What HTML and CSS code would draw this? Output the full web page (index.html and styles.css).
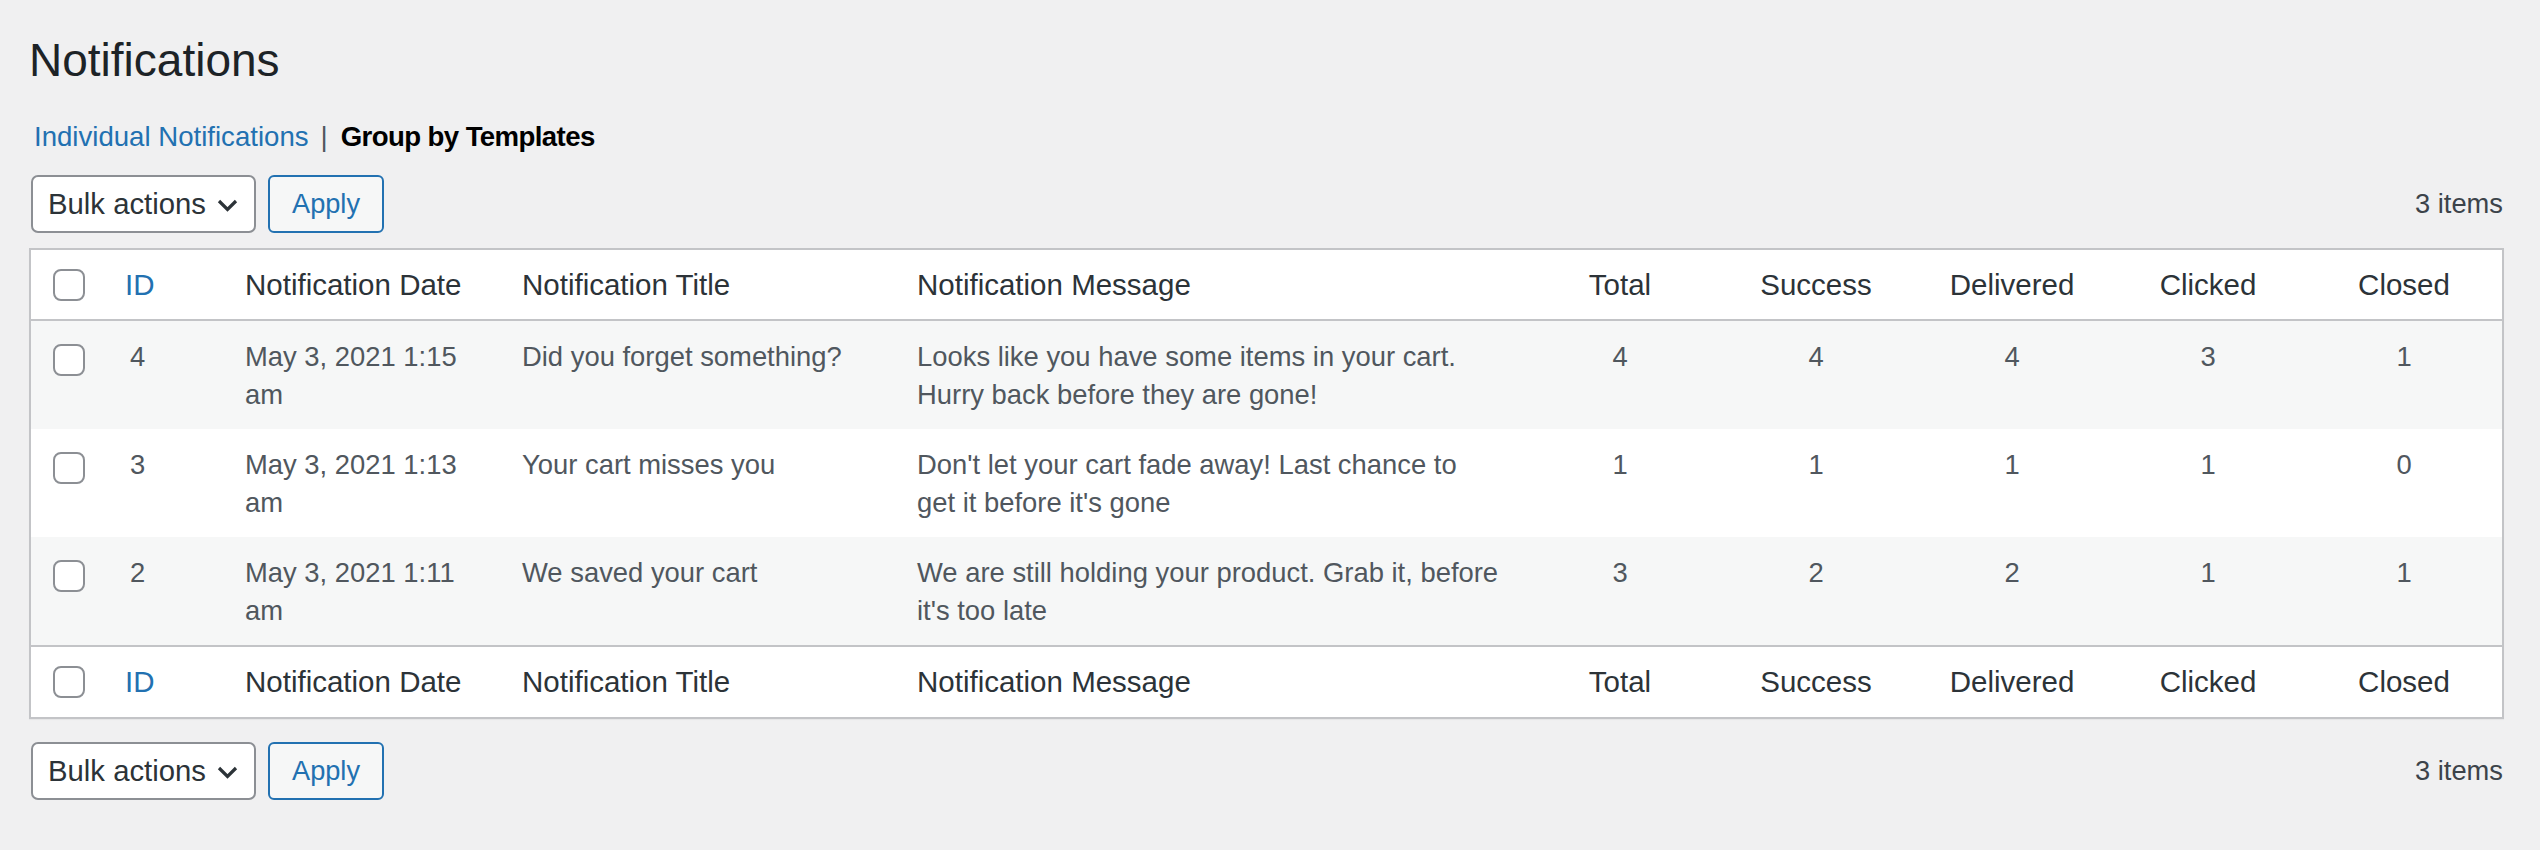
FILE: index.html
```html
<!DOCTYPE html>
<html lang="en">
<head>
<meta charset="utf-8">
<title>Notifications</title>
<link rel="stylesheet" href="styles.css">
</head>
<body>
<div class="wrap">
  <h1 class="page-title">Notifications</h1>
  <ul class="subsubsub">
    <li><a class="tab-link" href="#">Individual Notifications</a><span class="sep">|</span></li>
    <li><span class="current">Group by Templates</span></li>
  </ul>

  <div class="tablenav tablenav-top">
    <div class="actions">
      <div class="select">
        <span>Bulk actions</span>
        <svg class="chevron" width="21" height="13" viewBox="0 0 21 13"><path d="M2 2 L10.5 10.5 L19 2" fill="none" stroke="#2c3338" stroke-width="3.2"/></svg>
      </div>
      <button class="button" type="button">Apply</button>
    </div>
    <div class="count">3 items</div>
  </div>

  <table class="list">
    <colgroup>
      <col class="c-check"><col class="c-id"><col class="c-date"><col class="c-title"><col class="c-msg">
      <col class="c-num"><col class="c-num"><col class="c-num"><col class="c-num"><col class="c-num">
    </colgroup>
    <thead>
      <tr>
        <th class="check"><span class="cb"></span></th>
        <th class="col-id"><a href="#">ID</a></th>
        <th>Notification Date</th>
        <th>Notification Title</th>
        <th>Notification Message</th>
        <th class="num">Total</th>
        <th class="num">Success</th>
        <th class="num">Delivered</th>
        <th class="num">Clicked</th>
        <th class="num">Closed</th>
      </tr>
    </thead>
    <tbody>
      <tr>
        <td class="check"><span class="cb"></span></td>
        <td class="col-id">4</td>
        <td class="col-date">May 3, 2021 1:15 am</td>
        <td>Did you forget something?</td>
        <td class="col-msg">Looks like you have some items in your cart. Hurry back before they are gone!</td>
        <td class="num">4</td>
        <td class="num">4</td>
        <td class="num">4</td>
        <td class="num">3</td>
        <td class="num">1</td>
      </tr>
      <tr>
        <td class="check"><span class="cb"></span></td>
        <td class="col-id">3</td>
        <td class="col-date">May 3, 2021 1:13 am</td>
        <td>Your cart misses you</td>
        <td class="col-msg">Don't let your cart fade away! Last chance to get it before it's gone</td>
        <td class="num">1</td>
        <td class="num">1</td>
        <td class="num">1</td>
        <td class="num">1</td>
        <td class="num">0</td>
      </tr>
      <tr>
        <td class="check"><span class="cb"></span></td>
        <td class="col-id">2</td>
        <td class="col-date">May 3, 2021 1:11 am</td>
        <td>We saved your cart</td>
        <td class="col-msg">We are still holding your product. Grab it, before it's too late</td>
        <td class="num">3</td>
        <td class="num">2</td>
        <td class="num">2</td>
        <td class="num">1</td>
        <td class="num">1</td>
      </tr>
    </tbody>
    <tfoot>
      <tr>
        <th class="check"><span class="cb"></span></th>
        <th class="col-id"><a href="#">ID</a></th>
        <th>Notification Date</th>
        <th>Notification Title</th>
        <th>Notification Message</th>
        <th class="num">Total</th>
        <th class="num">Success</th>
        <th class="num">Delivered</th>
        <th class="num">Clicked</th>
        <th class="num">Closed</th>
      </tr>
    </tfoot>
  </table>

  <div class="tablenav tablenav-bottom">
    <div class="actions">
      <div class="select">
        <span>Bulk actions</span>
        <svg class="chevron" width="21" height="13" viewBox="0 0 21 13"><path d="M2 2 L10.5 10.5 L19 2" fill="none" stroke="#2c3338" stroke-width="3.2"/></svg>
      </div>
      <button class="button" type="button">Apply</button>
    </div>
    <div class="count">3 items</div>
  </div>
</div>
</body>
</html>
```

FILE: styles.css
```css
html, body {
  margin: 0;
  padding: 0;
}

body {
  background: #f0f0f1;
  font-family: "Liberation Sans", Arial, sans-serif;
  color: #3c434a;
}

.wrap {
  padding: 32px 36px 0 29px;
}

.page-title {
  margin: 0;
  font-size: 46px;
  line-height: 56px;
  font-weight: 400;
  color: #1d2327;
}

.subsubsub {
  list-style: none;
  margin: 30px 0 0;
  padding: 0 0 0 5px;
  display: flex;
  font-size: 27.6px;
  line-height: 38px;
  color: #50575e;
}

.tab-link {
  color: #2271b1;
  text-decoration: none;
}

.sep {
  margin: 0 13px 0 12px;
  color: #50575e;
}

.current {
  font-weight: 700;
  letter-spacing: -0.6px;
  color: #000;
}

.tablenav {
  display: flex;
  justify-content: space-between;
  align-items: center;
  height: 58px;
}

.tablenav-top {
  margin: 19px 0 15px;
}

.tablenav-bottom {
  margin-top: 23px;
}

.actions {
  display: flex;
  align-items: center;
  gap: 12px;
  padding-left: 2px;
}

.select {
  box-sizing: border-box;
  width: 225px;
  height: 58px;
  display: flex;
  align-items: center;
  justify-content: space-between;
  padding: 0 16px 0 15px;
  border: 2px solid #8c8f94;
  border-radius: 7px;
  background: #fff;
  font-size: 29.3px;
  color: #2c3338;
}

.chevron {
  display: block;
  margin-top: 3px;
}

.button {
  box-sizing: border-box;
  height: 58px;
  padding: 0 22px;
  border: 2px solid #2271b1;
  border-radius: 6px;
  background: #f6f7f7;
  color: #2271b1;
  font-family: "Liberation Sans", Arial, sans-serif;
  font-size: 27.2px;
}

.count {
  font-size: 27.3px;
  color: #3c434a;
  padding-right: 1px;
}

.list {
  width: 100%;
  table-layout: fixed;
  border-collapse: separate;
  border-spacing: 0;
  background: #fff;
  border: 2px solid #c3c4c7;
  box-shadow: 0 1px 1px rgba(0, 0, 0, 0.04);
}

.c-check { width: 74px; }
.c-id { width: 120px; }
.c-date { width: 277px; }
.c-title { width: 395px; }
.c-msg { width: 625px; }
.c-num { width: 196px; }

.list th {
  text-align: left;
  font-weight: 400;
  font-size: 29.5px;
  line-height: 40px;
  padding: 15px 20px;
  color: #2c3338;
  vertical-align: middle;
}

.list thead th {
  padding-bottom: 14px;
  border-bottom: 2px solid #c3c4c7;
}

.list tfoot th {
  border-top: 2px solid #c3c4c7;
}

.list th a {
  color: #2271b1;
  text-decoration: none;
}

.list td {
  font-size: 27.4px;
  line-height: 38px;
  padding: 17px 20px 15px;
  color: #50575e;
  vertical-align: top;
}

.list tbody tr:nth-child(odd) {
  background: #f6f7f7;
}

.list .num {
  text-align: center;
}

.list .col-id {
  padding-left: 20px;
}

.list td.col-id {
  padding-left: 25px;
}

.list td.col-date {
  padding-right: 40px;
}

.list td.col-msg {
  padding-right: 22px;
}

.list th.check {
  padding-top: 0;
  padding-bottom: 0;
  padding-left: 22px;
  padding-right: 0;
}

.list td.check {
  padding: 23px 0 0 22px;
}

.cb {
  display: block;
  box-sizing: border-box;
  width: 32px;
  height: 32px;
  border: 2px solid #8c8f94;
  border-radius: 8px;
  background: #fff;
}
```
